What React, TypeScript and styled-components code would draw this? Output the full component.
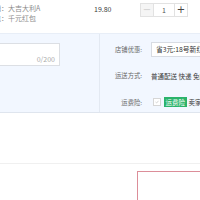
import React from "react";
import styled, { createGlobalStyle } from "styled-components";

const Global = createGlobalStyle`
  html, body { margin: 0; padding: 0; background: #fff; }
  body { font-family: "Noto Sans CJK SC", "Noto Sans", sans-serif; overflow: hidden; }
`;

const Page = styled.div`
  width: 200px;
  height: 200px;
  overflow: hidden;
  position: relative;
`;

const ItemRow = styled.div`
  height: 33px;
  display: flex;
  align-items: flex-start;
  padding-top: 3px;
  box-sizing: border-box;
`;

const Info = styled.div`
  width: 100px;
  margin-left: -6px;
  display: flex;
  flex-direction: column;
`;

const InfoLine = styled.div`
  font-size: 7px;
  line-height: 10px;
  color: #8c8c8c;
  white-space: nowrap;
`;

const Price = styled.div`
  width: 46px;
  font-size: 7px;
  line-height: 10px;
  color: #3c3c3c;
  padding-top: 1px;
`;

const Stepper = styled.div`
  display: flex;
  height: 14px;
`;

const StepBtn = styled.div<{ $disabled?: boolean }>`
  width: 14px;
  height: 14px;
  box-sizing: border-box;
  border: 1px solid #e2e2e2;
  background: ${(p) => (p.$disabled ? "#f5f5f5" : "#fff")};
  color: ${(p) => (p.$disabled ? "#d0d0d0" : "#444")};
  font-size: 10px;
  line-height: 11px;
  text-align: center;
  font-family: "DejaVu Sans", sans-serif;
`;

const StepInput = styled.div`
  width: 20px;
  height: 14px;
  box-sizing: border-box;
  border-top: 1px solid #e2e2e2;
  border-bottom: 1px solid #e2e2e2;
  font-size: 7px;
  line-height: 12px;
  text-align: center;
  color: #555;
`;

const Panel = styled.div`
  height: 80px;
  background: #f2f7ff;
  border-top: 1px solid #e8eef7;
  border-bottom: 1px solid #dfe5ee;
  box-sizing: border-box;
  display: flex;
`;

const LeftPane = styled.div`
  width: 100px;
  border-right: 1px solid #e3e9f2;
  padding-top: 9px;
  box-sizing: border-box;
`;

const MemoBox = styled.div`
  width: 70px;
  height: 23px;
  margin-left: -10px;
  background: #fff;
  border: 1px solid #dcdfe4;
  box-sizing: border-box;
  display: flex;
  align-items: flex-end;
  justify-content: flex-end;
  padding: 0 4px 1px 0;
`;

const Counter = styled.span`
  font-size: 7px;
  line-height: 9px;
  color: #aaa;
`;

const RightPane = styled.div`
  flex: 1;
  display: grid;
  grid-template-columns: 51px 1fr;
  grid-template-rows: 15px 37px 16px;
  padding-top: 8px;
  align-items: center;
`;

const Label = styled.div`
  font-size: 6.3px;
  color: #666;
  text-align: right;
  padding-right: 9px;
  white-space: nowrap;
`;

const Value = styled.div`
  display: flex;
  align-items: center;
  gap: 2px;
  font-size: 6.5px;
  color: #3c3c3c;
  white-space: nowrap;
  overflow: hidden;
`;

const Select = styled.div`
  height: 15px;
  width: 70px;
  flex-shrink: 0;
  background: #fff;
  border: 1px solid #d8dce3;
  box-sizing: border-box;
  font-size: 6.8px;
  line-height: 13px;
  padding-left: 4px;
  color: #333;
  white-space: nowrap;
  overflow: hidden;
`;

const Check = styled.span`
  width: 6px;
  height: 6px;
  margin: 0 1px 0 2px;
  border: 1px solid #d6d6d6;
  background: #fff;
  display: inline-flex;
  align-items: center;
  justify-content: center;
  flex-shrink: 0;
`;

const Badge = styled.span`
  background: #2ab36a;
  color: #fff;
  font-size: 6.5px;
  line-height: 10px;
  padding: 0 1.5px;
  flex-shrink: 0;
`;

const Footer = styled.div`
  height: 50px;
  border-bottom: 1px solid #f0f0f0;
`;

const TotalRow = styled.div`
  display: flex;
  justify-content: flex-end;
  padding-top: 7px;
`;

const TotalBox = styled.div`
  width: 63px;
  height: 40px;
  border: 1px solid #dc8e99;
  border-right: none;
  box-sizing: border-box;
`;

export default function App() {
  return (
    <Page>
      <Global />
      <ItemRow>
        <Info>
          <InfoLine>铺：大吉大利A</InfoLine>
          <InfoLine>包：千元红包</InfoLine>
        </Info>
        <Price>19.80</Price>
        <Stepper>
          <StepBtn $disabled>−</StepBtn>
          <StepInput>1</StepInput>
          <StepBtn>+</StepBtn>
        </Stepper>
      </ItemRow>
      <Panel>
        <LeftPane>
          <MemoBox>
            <Counter>0/200</Counter>
          </MemoBox>
        </LeftPane>
        <RightPane>
          <Label>店铺优惠:</Label>
          <Value>
            <Select>省3元:18号新红包</Select>
          </Value>
          <Label>运送方式:</Label>
          <Value>普通配送 快递 免邮</Value>
          <Label>运费险:</Label>
          <Value>
            <Check>
              <svg width="4" height="4" viewBox="0 0 4 4">
                <path d="M0.5 2 L1.6 3 L3.5 0.8" stroke="#bbb" strokeWidth="0.6" fill="none" />
              </svg>
            </Check>
            <Badge>运费险</Badge>
            <span>卖家赠送</span>
          </Value>
        </RightPane>
      </Panel>
      <Footer />
      <TotalRow>
        <TotalBox />
      </TotalRow>
    </Page>
  );
}
